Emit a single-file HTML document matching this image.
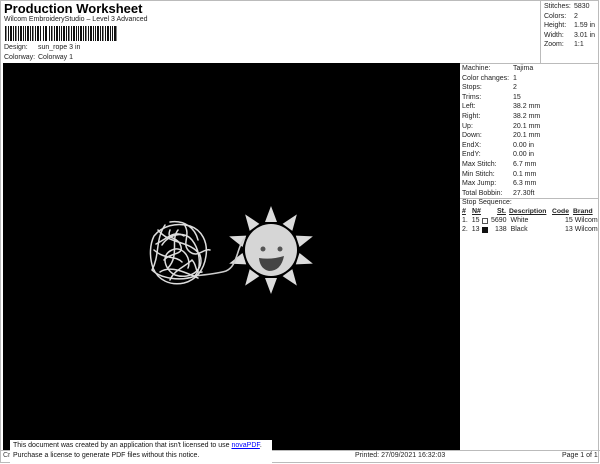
<!DOCTYPE html>
<html><head><meta charset="utf-8"><style>
*{margin:0;padding:0;box-sizing:border-box}
body{width:600px;height:464px;background:#fff;font-family:"Liberation Sans",sans-serif;font-size:7px;color:#222;position:relative;overflow:hidden}
.a{position:absolute;white-space:nowrap}
.t{font-weight:bold;font-size:13px;color:#000}
table{border-collapse:collapse}
td{padding:0;height:9.6px;line-height:9.6px}
</style></head><body>
<div style="position:absolute;left:0;top:0;width:599px;height:463px;border:1px solid #bbb"></div>
<div class="a t" style="left:4px;top:1px">Production Worksheet</div>
<div class="a" style="left:4px;top:16px">Wilcom EmbroideryStudio – Level 3 Advanced</div>
<svg class="a" style="left:5px;top:26px" width="113" height="15">
<g fill="#111">
<rect x="0" width="1.5" height="15"/><rect x="3" width="1" height="15"/><rect x="5" width="2" height="15"/><rect x="8" width="1" height="15"/><rect x="10" width="1.5" height="15"/><rect x="13" width="1" height="15"/><rect x="15" width="2" height="15"/><rect x="18" width="1" height="15"/><rect x="20" width="1" height="15"/><rect x="22" width="2" height="15"/><rect x="25" width="1" height="15"/><rect x="27" width="1.5" height="15"/><rect x="30" width="1" height="15"/><rect x="32" width="2" height="15"/><rect x="35" width="1" height="15"/><rect x="38" width="1" height="15"/><rect x="40" width="2" height="15"/><rect x="44" width="1" height="15"/><rect x="46" width="1.5" height="15"/><rect x="49" width="1" height="15"/><rect x="51" width="2" height="15"/><rect x="54" width="1" height="15"/><rect x="56" width="1" height="15"/><rect x="58" width="2" height="15"/><rect x="61" width="1" height="15"/><rect x="63" width="1.5" height="15"/><rect x="66" width="1" height="15"/><rect x="68" width="2" height="15"/><rect x="71" width="1" height="15"/><rect x="73" width="1" height="15"/><rect x="75" width="2" height="15"/><rect x="78" width="1" height="15"/><rect x="80" width="1.5" height="15"/><rect x="83" width="1" height="15"/><rect x="85" width="2" height="15"/><rect x="88" width="1" height="15"/><rect x="90" width="1" height="15"/><rect x="92" width="2" height="15"/><rect x="95" width="1" height="15"/><rect x="97" width="1.5" height="15"/><rect x="100" width="1" height="15"/><rect x="102" width="2" height="15"/><rect x="105" width="1" height="15"/><rect x="107" width="1" height="15"/><rect x="109" width="2.5" height="15"/>
</g></svg>
<div class="a" style="left:4px;top:44px">Design:</div><div class="a" style="left:38px;top:44px">sun_rope 3 in</div>
<div class="a" style="left:4px;top:54px">Colorway:</div><div class="a" style="left:38px;top:54px">Colorway 1</div>
<div class="a" style="left:540px;top:0;width:1px;height:63px;background:#bbb"></div>
<div class="a" style="left:460px;top:63px;width:139px;height:1px;background:#bbb"></div>
<table class="a" style="left:544px;top:2px">
<tr><td style="width:30px">Stitches:</td><td>5830</td></tr>
<tr><td>Colors:</td><td>2</td></tr>
<tr><td>Height:</td><td>1.59 in</td></tr>
<tr><td>Width:</td><td>3.01 in</td></tr>
<tr><td>Zoom:</td><td>1:1</td></tr></table>
<div class="a" style="left:3px;top:63px;width:457px;height:387px;background:#000"></div>
<table class="a" style="left:462px;top:64px">
<tr><td style="width:51px">Machine:</td><td>Tajima</td></tr>
<tr><td>Color changes:</td><td>1</td></tr>
<tr><td>Stops:</td><td>2</td></tr>
<tr><td>Trims:</td><td>15</td></tr>
<tr><td>Left:</td><td>38.2 mm</td></tr>
<tr><td>Right:</td><td>38.2 mm</td></tr>
<tr><td>Up:</td><td>20.1 mm</td></tr>
<tr><td>Down:</td><td>20.1 mm</td></tr>
<tr><td>EndX:</td><td>0.00 in</td></tr>
<tr><td>EndY:</td><td>0.00 in</td></tr>
<tr><td>Max Stitch:</td><td>6.7 mm</td></tr>
<tr><td>Min Stitch:</td><td>0.1 mm</td></tr>
<tr><td>Max Jump:</td><td>6.3 mm</td></tr>
<tr><td>Total Bobbin:</td><td>27.30ft</td></tr></table>
<div class="a" style="left:460px;top:198px;width:139px;height:1px;background:#bbb"></div>
<div class="a" style="left:462px;top:199px">Stop Sequence:</div>
<div class="a" style="left:462px;top:208px;font-weight:bold;text-decoration:underline">#</div>
<div class="a" style="left:472px;top:208px;font-weight:bold;text-decoration:underline">N#</div>
<div class="a" style="left:497px;top:208px;font-weight:bold;text-decoration:underline">St.</div>
<div class="a" style="left:509px;top:208px;font-weight:bold;text-decoration:underline;font-size:6.8px">Description</div>
<div class="a" style="left:552px;top:208px;font-weight:bold;text-decoration:underline;font-size:6.8px">Code</div>
<div class="a" style="left:573px;top:208px;font-weight:bold;text-decoration:underline;font-size:6.8px">Brand</div>
<div class="a" style="left:462px;top:217px">1.&nbsp;&nbsp;15</div><div class="a" style="left:482px;top:218px;width:6px;height:6px;border:0.7px solid #555"></div>
<div class="a" style="left:491px;top:217px">5690&nbsp;&nbsp;White</div><div class="a" style="left:565px;top:217px">15&nbsp;Wilcom</div>
<div class="a" style="left:462px;top:226px">2.&nbsp;&nbsp;13</div><div class="a" style="left:482px;top:227px;width:6px;height:6px;background:#111"></div>
<div class="a" style="left:495px;top:226px">138&nbsp;&nbsp;Black</div><div class="a" style="left:565px;top:226px">13&nbsp;Wilcom</div>
<svg class="a" style="left:140px;top:200px" width="180" height="110">
<g transform="translate(131,50)" fill="#dcdcdc">
<polygon points="-6,-28 6,-28 0,-44" transform="rotate(0)"/>
<polygon points="-6,-28 6,-28 0,-44" transform="rotate(36)"/>
<polygon points="-6,-28 6,-28 0,-44" transform="rotate(72)"/>
<polygon points="-6,-28 6,-28 0,-44" transform="rotate(108)"/>
<polygon points="-6,-28 6,-28 0,-44" transform="rotate(144)"/>
<polygon points="-6,-28 6,-28 0,-44" transform="rotate(180)"/>
<polygon points="-6,-28 6,-28 0,-44" transform="rotate(216)"/>
<polygon points="-6,-28 6,-28 0,-44" transform="rotate(252)"/>
<polygon points="-6,-28 6,-28 0,-44" transform="rotate(288)"/>
<polygon points="-6,-28 6,-28 0,-44" transform="rotate(324)"/>
<circle r="26" fill="#d6d6d6"/>
<circle cx="-8" cy="-1" r="2.5" fill="#555"/><circle cx="9" cy="-1" r="2.5" fill="#555"/>
<path d="M-12 8 Q0 10 13 6 Q10 21 -2 21 Q-11 19 -12 8Z" fill="#444"/>
</g>
<path d="M105 38 C96 48 98 66 86 71 C76 74 64 75 53 76" stroke="#ccc" stroke-width="1.6" fill="none"/>
<g stroke="#ddd" stroke-width="1.5" fill="none" stroke-linecap="round">
<path d="M14 36 C22 26 36 22 50 26 C62 30 68 42 66 56 C64 70 56 80 44 83 C30 86 18 80 13 68 C9 56 10 44 14 36"/>
<path d="M18 30 C30 45 50 40 60 55 C65 70 50 80 35 75 C25 70 20 55 32 50 C42 45 52 58 48 68"/>
<path d="M25 25 C15 40 20 55 12 70 C20 78 40 82 55 76 C62 68 60 50 52 40 C44 30 28 35 22 45"/>
<path d="M30 22 C45 20 55 28 58 40 M14 50 C25 60 35 55 42 62 M20 72 C30 65 45 72 58 78 M38 30 C30 40 40 55 28 68"/>
<path d="M44 24 C52 36 40 44 50 52 C58 58 64 48 70 50 M24 60 C30 52 46 56 40 44 C36 36 26 40 30 30 M16 44 C28 38 34 30 44 36 M30 80 C34 70 46 66 52 60 C58 66 54 74 62 72"/>
</g>
</svg>
<div class="a" style="left:0;top:450px;width:600px;height:1px;background:#bbb"></div>
<div class="a" style="left:3px;top:452px;color:#444">Cr</div>
<div class="a" style="left:10px;top:440px;width:262px;height:24px;background:#fff;font-size:7px;line-height:10px;padding:1px 3px;color:#111">This document was created by an application that isn't licensed to use <span style="color:#00f;text-decoration:underline">novaPDF</span>.<br>Purchase a license to generate PDF files without this notice.</div>
<div class="a" style="left:355px;top:452px">Printed: 27/09/2021 16:32:03</div>
<div class="a" style="left:562px;top:452px">Page 1 of 1</div>
</body></html>
